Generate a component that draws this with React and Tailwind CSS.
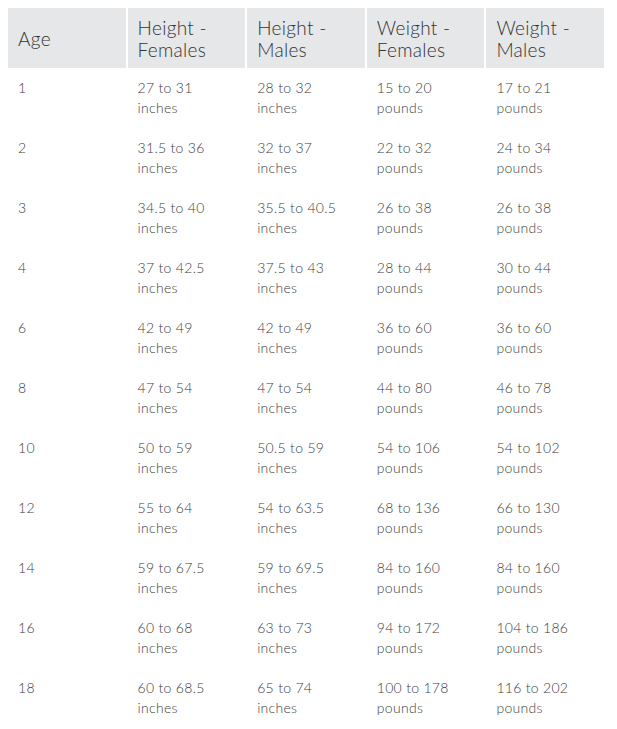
import React from "react";

const rows = [
  ["1", "27 to 31", "28 to 32", "15 to 20", "17 to 21"],
  ["2", "31.5 to 36", "32 to 37", "22 to 32", "24 to 34"],
  ["3", "34.5 to 40", "35.5 to 40.5", "26 to 38", "26 to 38"],
  ["4", "37 to 42.5", "37.5 to 43", "28 to 44", "30 to 44"],
  ["6", "42 to 49", "42 to 49", "36 to 60", "36 to 60"],
  ["8", "47 to 54", "47 to 54", "44 to 80", "46 to 78"],
  ["10", "50 to 59", "50.5 to 59", "54 to 106", "54 to 102"],
  ["12", "55 to 64", "54 to 63.5", "68 to 136", "66 to 130"],
  ["14", "59 to 67.5", "59 to 69.5", "84 to 160", "84 to 160"],
  ["16", "60 to 68", "63 to 73", "94 to 172", "104 to 186"],
  ["18", "60 to 68.5", "65 to 74", "100 to 178", "116 to 202"],
];

const headers = [
  ["Age"],
  ["Height -", "Females"],
  ["Height -", "Males"],
  ["Weight -", "Females"],
  ["Weight -", "Males"],
];

export default function App() {
  return (
    <div className="bg-white min-h-[729px] p-[6px] font-['Century_Gothic','Lato',sans-serif]">
      <table className="w-[600px] table-fixed border-separate border-spacing-[2px]">
        <thead>
          <tr>
            {headers.map((h, i) => (
              <th
                key={i}
                className="bg-[#e6e7e8] h-[60px] px-[10px] pt-[1px] align-middle text-left font-light text-[19px] leading-[22px] tracking-[0.3px] text-[#333333]"
              >
                {h.map((line, j) => (
                  <div key={j}>{line}</div>
                ))}
              </th>
            ))}
          </tr>
        </thead>
        <tbody>
          {rows.map((r) => (
            <tr key={r[0]}>
              {r.map((cell, i) => (
                <td
                  key={i}
                  className="px-[10px] pt-[8px] pb-[10px] align-top font-light text-[14px] leading-[20px] tracking-[0.3px] text-[#404040]"
                >
                  {i === 0 ? (
                    cell
                  ) : (
                    <>
                      <div>{cell}</div>
                      <div>{i <= 2 ? "inches" : "pounds"}</div>
                    </>
                  )}
                </td>
              ))}
            </tr>
          ))}
        </tbody>
      </table>
    </div>
  );
}
